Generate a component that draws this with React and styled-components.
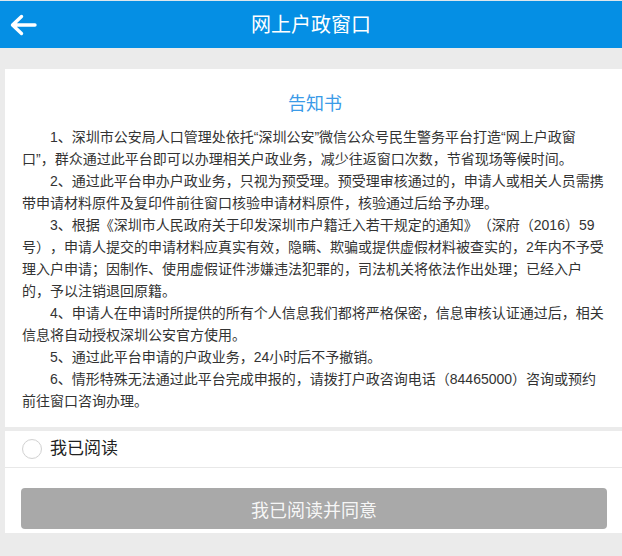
import React from "react";
import styled, { createGlobalStyle } from "styled-components";

const Global = createGlobalStyle`
  html, body { margin: 0; padding: 0; }
  body {
    background: #ebebeb;
    font-family: "Liberation Sans", "Noto Sans CJK SC", sans-serif;
    color: #333;
    text-spacing-trim: space-all;
  }
  * { box-sizing: border-box; }
`;

const Page = styled.div`
  min-height: 556px;
  background: #ebebeb;
  display: flex;
  flex-direction: column;
`;

const Header = styled.header`
  height: 48px;
  border-top: 1px solid #dde6ec;
  background: #058fe4;
  display: grid;
  grid-template-columns: 1fr auto 1fr;
  align-items: center;
`;

const BackButton = styled.button`
  justify-self: start;
  margin-left: 9px;
  padding: 0;
  border: 0;
  background: transparent;
  display: flex;
  align-items: center;
  cursor: pointer;
`;

const HeaderTitle = styled.h1`
  margin: 0;
  font-size: 20px;
  font-weight: normal;
  color: #fff;
  line-height: 24px;
`;

const Main = styled.main`
  padding: 21px 0 0 5px;
  display: flex;
  flex-direction: column;
  gap: 4px;
`;

const NoticeCard = styled.section`
  background: #fff;
  padding: 24px 14px 15px 17px;
`;

const NoticeTitle = styled.h2`
  margin: 0 0 11px;
  text-align: center;
  font-size: 18px;
  line-height: 22px;
  font-weight: normal;
  color: #3b9be8;
`;

const Para = styled.p`
  margin: 0;
  font-size: 14px;
  line-height: 22px;
  text-indent: 2em;
  color: #333;
  text-spacing-trim: space-all;
`;

const ActionPanel = styled.section`
  background: #fff;
  display: flex;
  flex-direction: column;
  padding-bottom: 4px;
`;

const CheckRow = styled.label`
  height: 37px;
  display: flex;
  align-items: center;
  gap: 8px;
  padding-left: 17px;
  border-bottom: 1px solid #e8e8e8;
  cursor: pointer;
`;

const Radio = styled.span`
  width: 20px;
  height: 20px;
  border-radius: 50%;
  border: 1px solid #d2d2d2;
  background: #fff;
  box-shadow: inset 0 0 1px rgba(0,0,0,0.05);
`;

const CheckText = styled.span`
  font-size: 17px;
  color: #222;
  line-height: 22px;
`;

const AgreeButton = styled.button`
  margin: 20px 15px 0 16px;
  height: 41px;
  border: 0;
  border-radius: 4px;
  background: #a9a9a9;
  color: rgba(255, 255, 255, 0.92);
  font-family: "Liberation Sans", "Noto Sans CJK SC", sans-serif;
  font-size: 18px;
`;

const paragraphs = [
  "1、深圳市公安局人口管理处依托“深圳公安”微信公众号民生警务平台打造“网上户政窗口”，群众通过此平台即可以办理相关户政业务，减少往返窗口次数，节省现场等候时间。",
  "2、通过此平台申办户政业务，只视为预受理。预受理审核通过的，申请人或相关人员需携带申请材料原件及复印件前往窗口核验申请材料原件，核验通过后给予办理。",
  "3、根据《深圳市人民政府关于印发深圳市户籍迁入若干规定的通知》（深府（2016）59号），申请人提交的申请材料应真实有效，隐瞒、欺骗或提供虚假材料被查实的，2年内不予受理入户申请；因制作、使用虚假证件涉嫌违法犯罪的，司法机关将依法作出处理；已经入户的，予以注销退回原籍。",
  "4、申请人在申请时所提供的所有个人信息我们都将严格保密，信息审核认证通过后，相关信息将自动授权深圳公安官方使用。",
  "5、通过此平台申请的户政业务，24小时后不予撤销。",
  "6、情形特殊无法通过此平台完成申报的，请拨打户政咨询电话（84465000）咨询或预约前往窗口咨询办理。",
];

export default function App() {
  return (
    <>
      <Global />
      <Page>
        <Header>
          <BackButton aria-label="返回">
            <svg width="28" height="22" viewBox="0 0 28 22" fill="none">
              <path
                d="M26 11 H4 M12.5 2.5 L3.5 11 L12.5 19.5"
                stroke="#fff"
                strokeWidth="3.4"
                strokeLinecap="round"
                strokeLinejoin="round"
              />
            </svg>
          </BackButton>
          <HeaderTitle>网上户政窗口</HeaderTitle>
          <span />
        </Header>
        <Main>
          <NoticeCard>
            <NoticeTitle>告知书</NoticeTitle>
            {paragraphs.map((p, i) => (
              <Para key={i}>{p}</Para>
            ))}
          </NoticeCard>
          <ActionPanel>
            <CheckRow>
              <Radio />
              <CheckText>我已阅读</CheckText>
            </CheckRow>
            <AgreeButton>我已阅读并同意</AgreeButton>
          </ActionPanel>
        </Main>
      </Page>
    </>
  );
}
